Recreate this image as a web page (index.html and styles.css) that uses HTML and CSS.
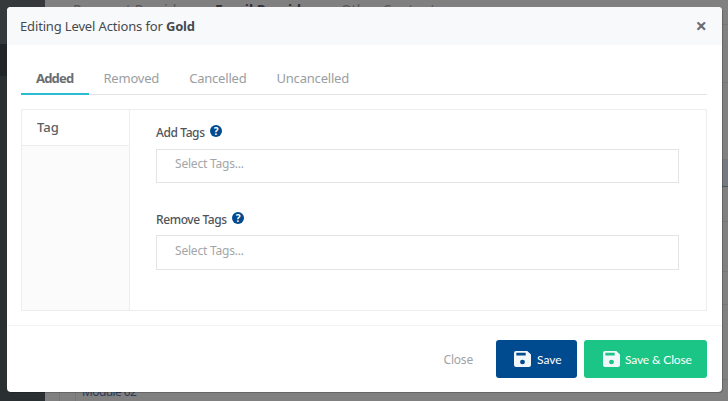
FILE: index.html
```html
<!DOCTYPE html>
<html lang="en">

<head>
  <meta charset="UTF-8">
  <title>Editing Level Actions</title>
  <link rel="stylesheet" href="styles.css">
</head>

<body>
  <div class="page">
    <div class="sidebar">
      <div class="sidebar-top"></div>
      <div class="sidebar-active"></div>
    </div>
    <div class="page-main">
      <ul class="page-tabs">
        <li>Payment Provider</li>
        <li class="page-tab-active">Email Provider</li>
        <li>Other Content</li>
      </ul>
      <div class="page-row page-row-a"></div>
      <div class="page-row page-row-b"></div>
      <div class="page-row page-row-hover"></div>
      <div class="page-row page-row-c"></div>
      <div class="page-row page-row-d"></div>
      <div class="page-row page-row-e"></div>
      <div class="page-row page-row-f"></div>
      <div class="page-module">
        <div class="page-module-cell">
          <span class="page-module-name">Module 02</span>
        </div>
      </div>
    </div>
  </div>

  <div class="modal">
    <div class="modal-header">
      <h5 class="modal-title">Editing Level Actions for <strong>Gold</strong></h5>
      <span class="modal-close">&times;</span>
    </div>

    <div class="modal-body">
      <ul class="tab-header">
        <li class="tab-header-active">Added</li>
        <li>Removed</li>
        <li>Cancelled</li>
        <li>Uncancelled</li>
      </ul>

      <div class="panel">
        <div class="panel-nav">
          <div class="panel-nav-item">Tag</div>
        </div>
        <div class="panel-form">
          <label class="field-label">Add Tags
            <svg class="help-icon" viewBox="0 0 12 12"><circle cx="6" cy="6" r="6" fill="#004a8f"/><text x="6" y="9.500" text-anchor="middle" class="help-mark">?</text></svg>
          </label>
          <div class="select-box">Select Tags...</div>
          <label class="field-label field-label-second">Remove Tags
            <svg class="help-icon" viewBox="0 0 12 12"><circle cx="6" cy="6" r="6" fill="#004a8f"/><text x="6" y="9.500" text-anchor="middle" class="help-mark">?</text></svg>
          </label>
          <div class="select-box select-box-second">Select Tags...</div>
        </div>
      </div>
    </div>

    <div class="modal-footer">
      <span class="btn-close">Close</span>
      <button class="btn btn-save">
        <svg class="btn-icon" viewBox="0 0 16 16" preserveAspectRatio="none"><path fill="#f2f7fb" fill-rule="evenodd" d="M2 0h10.500l3.500 3.500v10.500a2 2 0 0 1-2 2H2a2 2 0 0 1-2-2V2a2 2 0 0 1 2-2zM2.200 1.800v2.800h8.800v-2.800zM8 8.700a2.300 2.300 0 1 0 0 4.600 2.300 2.300 0 0 0 0-4.600z"/></svg>
        Save
      </button>
      <button class="btn btn-save-close">
        <svg class="btn-icon" viewBox="0 0 16 16" preserveAspectRatio="none"><path fill="#f2f7fb" fill-rule="evenodd" d="M2 0h10.500l3.500 3.500v10.500a2 2 0 0 1-2 2H2a2 2 0 0 1-2-2V2a2 2 0 0 1 2-2zM2.200 1.800v2.800h8.800v-2.800zM8 8.700a2.300 2.300 0 1 0 0 4.600 2.300 2.300 0 0 0 0-4.600z"/></svg>
        Save &amp; Close
      </button>
    </div>
  </div>
</body>

</html>
```

FILE: styles.css
```css
* {
  margin: 0;
  padding: 0;
  box-sizing: border-box;
}

ul {
  list-style-type: none;
}

html,
body {
  height: 100%;
  overflow: hidden;
}

body {
  font-family: "Noto Sans", "Open Sans", sans-serif;
  color: #4a4f54;
  background: #808080;
}

.page {
  display: flex;
  height: 100%;
}

.sidebar {
  width: 45px;
  background: #2a2f32;
}

.sidebar-top {
  height: 44px;
  background: #36393b;
}

.sidebar-active {
  height: 32px;
  background: #212528;
}

.page-main {
  flex: 1;
  display: flex;
  flex-direction: column;
  background: #808080;
}

.page-tabs {
  display: flex;
  flex-shrink: 0;
  gap: 25px;
  height: 25px;
  padding-left: 28px;
  border-bottom: 1px solid #777;
  font-size: 14px;
  line-height: 19px;
  color: #555;
}

.page-tab-active {
  font-weight: 700;
  color: #333;
}

.page-row {
  border-bottom: 1px solid #777;
}

.page-row-a {
  height: 58px;
}

.page-row-b {
  height: 77px;
}

.page-row-hover {
  height: 27px;
  background: #757a80;
  border-bottom-color: #4c5560;
}

.page-row-c {
  height: 35px;
}

.page-row-d {
  height: 50px;
}

.page-row-e {
  height: 33px;
}

.page-row-f {
  flex: 1;
}

.page-module {
  flex-shrink: 0;
  height: 21px;
  margin-left: 14px;
  padding-left: 15px;
  border-left: 1px solid #777;
}

.page-module-cell {
  display: flex;
  align-items: flex-end;
  height: 100%;
  padding: 0 0 1px 6px;
  border-left: 1px solid #777;
}

.page-module-name {
  font-size: 12px;
  line-height: 16px;
  letter-spacing: -0.6px;
  color: #2c3a55;
}

.modal {
  position: absolute;
  top: 7px;
  left: 7px;
  width: 715px;
  height: 385px;
  display: flex;
  flex-direction: column;
  background: #fff;
  border-radius: 4px;
  box-shadow: 1px 1px 0 rgba(0, 0, 0, 0.2);
}

.modal-header {
  display: flex;
  align-items: center;
  justify-content: space-between;
  height: 38px;
  padding: 0 15px 0 13px;
  background: #f8f9fa;
  border-radius: 4px 4px 0 0;
}

.modal-title {
  font-size: 13px;
  font-weight: 400;
  color: #454a50;
  letter-spacing: -0.15px;
}

.modal-title strong {
  font-weight: 700;
}

.modal-close {
  font-size: 20px;
  font-weight: 700;
  line-height: 20px;
  color: #6a6e72;
}

.modal-body {
  flex: 1;
  padding: 15px 15px 0 14px;
}

.tab-header {
  display: flex;
  height: 35px;
  border-bottom: 1px solid #e2e3e5;
  font-size: 13px;
  letter-spacing: -0.2px;
}

.tab-header li {
  padding: 9px 15px 0;
  color: #9a9ea2;
}

.tab-header .tab-header-active {
  height: 35px;
  padding-right: 16px;
  margin-right: -1px;
  border-bottom: 2px solid #2bbcd4;
  color: #6a6e72;
  font-weight: 700;
  letter-spacing: -0.8px;
}

.panel {
  display: flex;
  height: 202px;
  margin-top: 14px;
  border: 1px solid #eceded;
}

.panel-nav {
  width: 108px;
  background: #fbfbfc;
  border-right: 1px solid #eceded;
}

.panel-nav-item {
  height: 36px;
  padding: 8px 15px 0;
  background: #fff;
  border-bottom: 1px solid #eceded;
  font-size: 13px;
  font-weight: 500;
  color: #5a5f64;
}

.panel-form {
  flex: 1;
  padding: 13px 27px 0 26px;
}

.field-label {
  display: flex;
  align-items: center;
  gap: 5px;
  height: 18px;
  margin-bottom: 8px;
  font-size: 12px;
  font-weight: 500;
  color: #4f5459;
  letter-spacing: -0.4px;
}

.field-label-second {
  margin-top: 27px;
  margin-bottom: 7px;
}

.help-icon {
  width: 12px;
  height: 12px;
  margin-top: -2px;
}

.help-mark {
  fill: #fff;
  font-size: 10px;
  font-weight: 700;
}

.select-box {
  height: 34px;
  padding: 5px 18px;
  border: 1px solid #e3e4e5;
  font-size: 12px;
  color: #a3a6a9;
  letter-spacing: -0.2px;
}

.select-box-second {
  height: 35px;
  padding-top: 6px;
}

.modal-footer {
  display: flex;
  align-items: center;
  justify-content: flex-end;
  height: 67px;
  padding: 0 15px 0 0;
  border-top: 1px solid #f4f4f5;
}

.btn-close {
  margin-right: 23px;
  font-size: 12px;
  color: #a0a3a6;
  letter-spacing: -0.2px;
}

.btn {
  display: flex;
  align-items: center;
  gap: 5px;
  height: 38px;
  border: 0;
  border-radius: 3px;
  font-family: "Lato", sans-serif;
  font-size: 12px;
  color: #fff;
}

.btn-save {
  width: 81px;
  padding-left: 18px;
  margin-right: 7px;
  gap: 6px;
  background: #004a8f;
}

.btn-save-close {
  width: 123px;
  padding-left: 19px;
  letter-spacing: -0.15px;
  background: #1bc585;
}

.btn-icon {
  width: 17px;
  height: 16px;
}
```
